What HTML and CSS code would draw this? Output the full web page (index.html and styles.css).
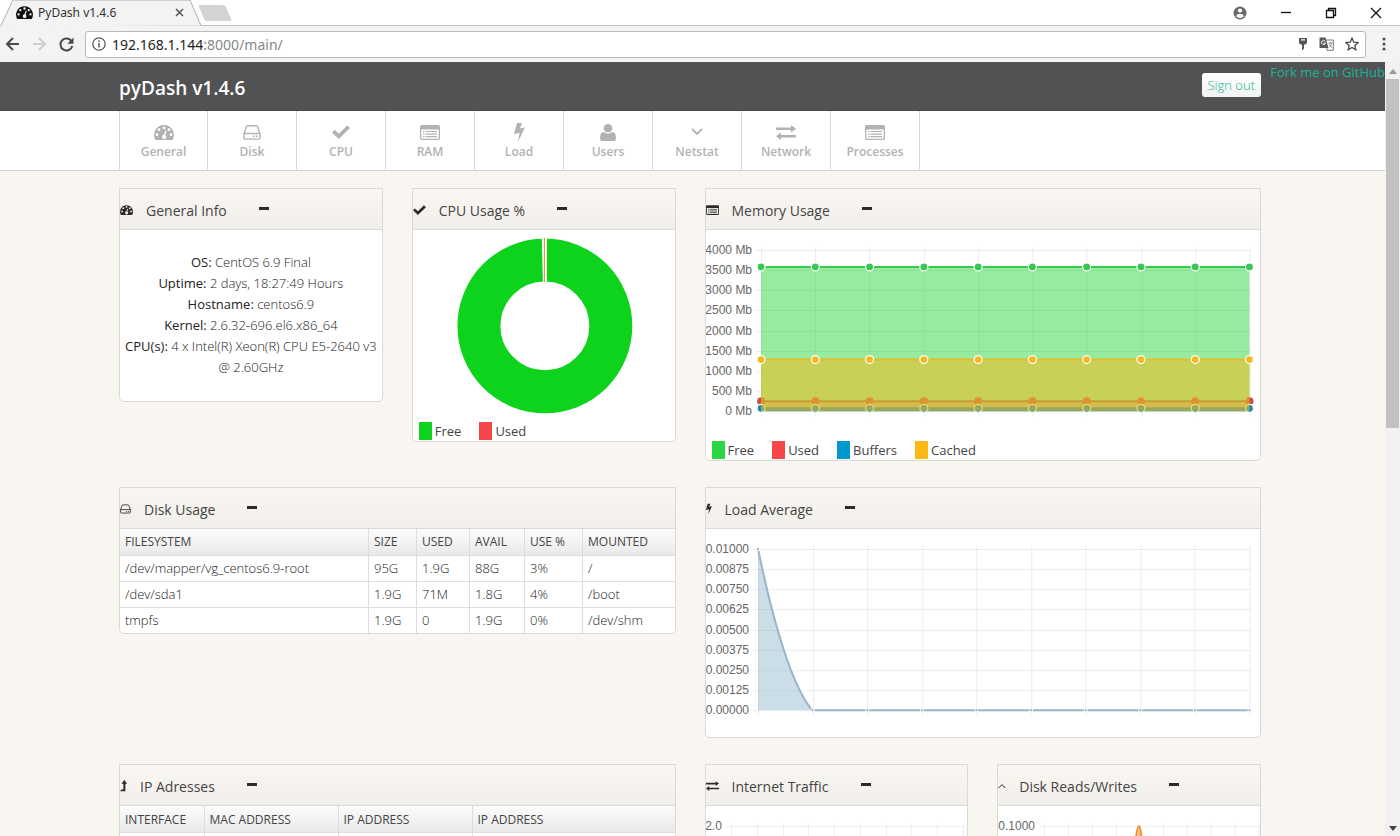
FILE: index.html
```html
<!DOCTYPE html>
<html lang="en">
<head>
    <meta charset="UTF-8">
    <meta name="viewport" content="width=device-width, initial-scale=1.0">
    <title>PyDash v1.4.6</title>
    <link rel="stylesheet" href="styles.css">
</head>
<body>
    <svg class="sprite" aria-hidden="true">
        <symbol id="i-gauge" viewBox="0 0 20 15">
            <path fill="currentColor" fill-rule="evenodd" d="M10 0a10 10 0 0 0-8.6 15h17.2A10 10 0 0 0 10 0zM10 1.4a1.4 1.4 0 1 1 0 2.8 1.4 1.4 0 0 1 0-2.8zM5 3.3a1.4 1.4 0 1 1 0 2.8 1.4 1.4 0 0 1 0-2.8zM3 8.3a1.4 1.4 0 1 1 0 2.8 1.4 1.4 0 0 1 0-2.8zM15 3.3a1.4 1.4 0 1 1 0 2.8 1.4 1.4 0 0 1 0-2.8zM17 8.3a1.4 1.4 0 1 1 0 2.8 1.4 1.4 0 0 1 0-2.8zM11.4 5.4l1.2.4-1.3 4.2a2.2 2.2 0 1 1-1.4-.3z"/>
        </symbol>
        <symbol id="i-disk" viewBox="0 0 18 15">
            <path fill="none" stroke="currentColor" stroke-width="1.4" stroke-linejoin="round" d="M1 8.5L3.6 1.6Q3.9.8 4.8.8h8.4q.9 0 1.2.8L17 8.5v4.2q0 1.4-1.4 1.4H2.4Q1 14.100 1 12.700zM1.200 8.500h15.600"/>
            <path fill="currentColor" d="M10 10.600h1.600v1.500H10zM13 10.600h1.600v1.500H13z"/>
        </symbol>
        <symbol id="i-check" viewBox="0 0 18 14">
            <path fill="currentColor" d="M0 7.500L2.700 4.800 6.800 8.700 15.200.4 18 3.100 6.800 14z"/>
        </symbol>
        <symbol id="i-list" viewBox="0 0 20 15">
            <path fill="currentColor" fill-rule="evenodd" d="M1.700 0h16.600Q20 0 20 1.700v11.600Q20 15 18.300 15H1.700Q0 15 0 13.300V1.700Q0 0 1.700 0zM1.300 4.500v8.500q0 .7.7.7h16q.7 0 .7-.7V4.500z"/>
            <path stroke="currentColor" stroke-width="1.200" d="M3 6.500h1.500M5.500 6.500H17M3 9.100h1.500M5.500 9.100H17M3 11.700h1.500M5.500 11.700H17"/>
        </symbol>
        <symbol id="i-bolt" viewBox="0 0 11 19">
            <path fill="currentColor" d="M3 0h5L6 5.500l5-1.200L4 19l1.600-9.200L0 11.200z"/>
        </symbol>
        <symbol id="i-user" viewBox="0 0 16 17">
            <circle fill="currentColor" cx="8" cy="4.300" r="4.300"/>
            <path fill="currentColor" d="M3.800 8a6 6 0 0 0 8.400 0q3.800.5 3.800 6.200 0 2.800-2.800 2.800H2.800Q0 17 0 14.200 0 8.500 3.800 8z"/>
        </symbol>
        <symbol id="i-down" viewBox="0 0 12 8">
            <path fill="none" stroke="currentColor" stroke-width="1.800" d="M1 1l5 5 5-5"/>
        </symbol>
        <symbol id="i-up" viewBox="0 0 12 8">
            <path fill="none" stroke="currentColor" stroke-width="1.500" d="M1 7l5-5 5 5"/>
        </symbol>
        <symbol id="i-swap" viewBox="0 0 20 15">
            <path fill="currentColor" d="M0 2.500h15V0l5 3.800-5 3.700V5H0zM20 10H5V7.500L0 11.200 5 15v-2.500h15z"/>
        </symbol>
        <symbol id="i-level" viewBox="0 0 8 14">
            <path fill="currentColor" d="M5 0l3.500 4.500H6.200V13H0l1.500-2h2.300V4.500H1.500z"/>
        </symbol>
    </svg>

    <div class="browser">
        <div class="tab-strip">
            <div class="tab">
                <svg class="tab-shape" viewBox="0 0 202 27" aria-hidden="true"><path d="M0 26.500L1 25.500 13 0H190L201 25.500H202"/></svg>
                <svg class="tab-icon"><use href="#i-gauge"/></svg>
                <span class="tab-title">PyDash v1.4.6</span>
                <button class="icon-button tab-close" aria-label="Close tab">
                    <svg width="9" height="9" viewBox="0 0 9 9"><path d="M1 1l7 7M8 1L1 8" stroke="#555" stroke-width="1.500"/></svg>
                </button>
            </div>
            <button class="icon-button" aria-label="New tab">
                <svg width="34" height="16" viewBox="0 0 34 16"><path d="M2 0h23q2 0 3 2l5 12q1 2-1 2H9q-2 0-3-2L1 2Q0 0 2 0z" fill="#d3d3d3"/></svg>
            </button>
            <div class="window-buttons">
                <button class="icon-button" aria-label="Profile">
                    <svg width="14" height="14" viewBox="0 0 14 14"><circle cx="7" cy="7" r="6.500" fill="#6a6a6a"/><circle cx="7" cy="4.500" r="2.100" fill="#fff"/><path d="M3 10q1-2.300 4-2.300t4 2.300q-1.500 2-4 2T3 10z" fill="#fff"/></svg>
                </button>
                <button class="icon-button" aria-label="Minimize">
                    <svg width="12" height="12" viewBox="0 0 12 12"><path d="M1 5.500h10" stroke="#111" stroke-width="1.300"/></svg>
                </button>
                <button class="icon-button" aria-label="Restore">
                    <svg width="12" height="12" viewBox="0 0 12 12" fill="none" stroke="#111" stroke-width="1.300"><path d="M1.500 3.500h7v7h-7zM3.500 3.500v-2h7v7h-2"/></svg>
                </button>
                <button class="icon-button" aria-label="Close">
                    <svg width="12" height="12" viewBox="0 0 12 12"><path d="M1 1l10 10M11 1L1 11" stroke="#111" stroke-width="1.300"/></svg>
                </button>
            </div>
        </div>
        <div class="toolbar">
            <button class="icon-button" aria-label="Back">
                <svg width="15" height="14" viewBox="0 0 15 14" fill="none" stroke="#4a4a4a" stroke-width="2"><path d="M14 7H2M8 1L2 7l6 6"/></svg>
            </button>
            <button class="icon-button" aria-label="Forward" disabled>
                <svg width="15" height="14" viewBox="0 0 15 14" fill="none" stroke="#cfcfcf" stroke-width="2"><path d="M1 7h12M7 1l6 6-6 6"/></svg>
            </button>
            <button class="icon-button" aria-label="Reload">
                <svg width="15" height="15" viewBox="0 0 15 15"><path d="M12.700 4.500A6 6 0 1 0 13.300 9" fill="none" stroke="#4a4a4a" stroke-width="2"/><path d="M14.500.5v6.300H8.300z" fill="#4a4a4a"/></svg>
            </button>
            <div class="address">
                <svg width="14" height="14" viewBox="0 0 14 14"><circle cx="7" cy="7" r="6.200" fill="none" stroke="#5a5a5a" stroke-width="1.300"/><path d="M7 6v4.500M7 3.300v1.500" stroke="#5a5a5a" stroke-width="1.500"/></svg>
                <label class="address-host" for="address">192.168.1.144</label>
                <input class="address-path" id="address" type="text" value=":8000/main/">
                <button class="icon-button" aria-label="Saved password">
                    <svg width="10" height="12" viewBox="0 0 10 12"><path fill="#555" fill-rule="evenodd" d="M1 0h8v5L7.500 6.500H6V10l-1 2H4V6.500H2.500L1 5zM3 1.300v1.200h4V1.300z"/></svg>
                </button>
                <button class="icon-button" aria-label="Translate">
                    <svg width="15" height="14" viewBox="0 0 15 14"><path d="M6.500 3h7.800v10.300H8z" fill="#fff" stroke="#777"/><path d="M1 .5h5.500L9.500 11H1Q.5 11 .5 10.500V1z" fill="#5a5a5a"/><path d="M6.200 4.300A2 2 0 1 0 6.500 6H4.800" fill="none" stroke="#fff"/><path d="M9.300 6h4M11.400 5v1M12.800 6q-.6 2.500-2.200 4M10.300 7.300l2.700 3.500" fill="none" stroke="#777" stroke-width=".8"/></svg>
                </button>
                <button class="icon-button" aria-label="Bookmark">
                    <svg width="14" height="14" viewBox="0 0 14 14"><path d="M7 1l1.700 4.200 4.500.3-3.400 2.900 1 4.400L7 10.400l-3.800 2.400 1-4.400L.8 5.500l4.500-.3z" fill="none" stroke="#4a4a4a" stroke-width="1.300"/></svg>
                </button>
            </div>
            <button class="icon-button" aria-label="Menu">
                <svg width="4" height="14" viewBox="0 0 4 14" fill="#4a4a4a"><circle cx="2" cy="2" r="1.500"/><circle cx="2" cy="7" r="1.500"/><circle cx="2" cy="12" r="1.500"/></svg>
            </button>
        </div>
    </div>

    <div class="viewport">
        <div class="page">
            <header class="header">
                <div class="container header-inner">
                    <h1>pyDash v1.4.6</h1>
                    <a class="sign-out" href="#logout">Sign out</a>
                </div>
                <a class="fork" href="#github">Fork me on GitHub</a>
            </header>

            <nav class="nav">
                <div class="container nav-inner">
                    <a href="#general"><svg width="20" height="15"><use href="#i-gauge"/></svg>General</a>
                    <a href="#disk"><svg width="18" height="15"><use href="#i-disk"/></svg>Disk</a>
                    <a href="#cpu"><svg width="18" height="14"><use href="#i-check"/></svg>CPU</a>
                    <a href="#ram"><svg width="20" height="15"><use href="#i-list"/></svg>RAM</a>
                    <a href="#load"><svg width="11" height="19"><use href="#i-bolt"/></svg>Load</a>
                    <a href="#users"><svg width="16" height="17"><use href="#i-user"/></svg>Users</a>
                    <a href="#netstat"><svg width="12" height="8"><use href="#i-down"/></svg>Netstat</a>
                    <a href="#network"><svg width="20" height="15"><use href="#i-swap"/></svg>Network</a>
                    <a href="#processes"><svg width="20" height="15"><use href="#i-list"/></svg>Processes</a>
                </div>
            </nav>

            <main class="container widgets">
                <section class="widget" id="general">
                    <div class="widget-header">
                        <svg width="13" height="10"><use href="#i-gauge"/></svg>
                        <h3>General Info</h3>
                        <button class="collapse" aria-label="Collapse"></button>
                    </div>
                    <div class="info">
                        <p><b>OS:</b> CentOS 6.9 Final</p>
                        <p><b>Uptime:</b> 2 days, 18:27:49 Hours</p>
                        <p><b>Hostname:</b> centos6.9</p>
                        <p><b>Kernel:</b> 2.6.32-696.el6.x86_64</p>
                        <p><b>CPU(s):</b> 4 x Intel(R) Xeon(R) CPU E5-2640 v3 @ 2.60GHz</p>
                    </div>
                </section>

                <section class="widget" id="cpu">
                    <div class="widget-header">
                        <svg width="13" height="10"><use href="#i-check"/></svg>
                        <h3>CPU Usage %</h3>
                        <button class="collapse" aria-label="Collapse"></button>
                    </div>
                    <svg class="chart" viewBox="0 0 262 191">
                        <circle cx="132" cy="96" r="66" fill="none" stroke="#0dd31d" stroke-width="43"/>
                        <path d="M129 8h5v44h-4z" fill="#fff"/>
                        <path d="M131 8h1v44h-1z" fill="#d9823c"/>
                    </svg>
                    <ul class="legend">
                        <li><i class="swatch cpu-free"></i>Free</li>
                        <li><i class="swatch used"></i>Used</li>
                    </ul>
                </section>

                <section class="widget wide" id="ram">
                    <div class="widget-header">
                        <svg width="13" height="10"><use href="#i-list"/></svg>
                        <h3>Memory Usage</h3>
                        <button class="collapse" aria-label="Collapse"></button>
                    </div>
                    <svg class="chart" id="memory-chart" viewBox="0 0 554 210"></svg>
                    <ul class="legend">
                        <li><i class="swatch free"></i>Free</li>
                        <li><i class="swatch used"></i>Used</li>
                        <li><i class="swatch buffers"></i>Buffers</li>
                        <li><i class="swatch cached"></i>Cached</li>
                    </ul>
                </section>

                <section class="widget wide" id="disk">
                    <div class="widget-header">
                        <svg width="11" height="10"><use href="#i-disk"/></svg>
                        <h3>Disk Usage</h3>
                        <button class="collapse" aria-label="Collapse"></button>
                    </div>
                    <table>
                        <colgroup>
                            <col><col class="col-size"><col class="col-used"><col class="col-avail"><col class="col-use"><col class="col-mounted">
                        </colgroup>
                        <thead>
                            <tr><th>FILESYSTEM</th><th>SIZE</th><th>USED</th><th>AVAIL</th><th>USE %</th><th>MOUNTED</th></tr>
                        </thead>
                        <tbody>
                            <tr><td>/dev/mapper/vg_centos6.9-root</td><td>95G</td><td>1.9G</td><td>88G</td><td>3%</td><td>/</td></tr>
                            <tr><td>/dev/sda1</td><td>1.9G</td><td>71M</td><td>1.8G</td><td>4%</td><td>/boot</td></tr>
                            <tr><td>tmpfs</td><td>1.9G</td><td>0</td><td>1.9G</td><td>0%</td><td>/dev/shm</td></tr>
                        </tbody>
                    </table>
                </section>

                <section class="widget wide" id="load">
                    <div class="widget-header">
                        <svg width="6" height="12"><use href="#i-bolt"/></svg>
                        <h3>Load Average</h3>
                        <button class="collapse" aria-label="Collapse"></button>
                    </div>
                    <svg class="chart" id="load-chart" viewBox="0 0 554 208"></svg>
                </section>

                <section class="widget wide" id="ip">
                    <div class="widget-header">
                        <svg width="7" height="12"><use href="#i-level"/></svg>
                        <h3>IP Adresses</h3>
                        <button class="collapse" aria-label="Collapse"></button>
                    </div>
                    <table>
                        <colgroup>
                            <col class="col-interface"><col class="col-address"><col class="col-address"><col>
                        </colgroup>
                        <thead>
                            <tr><th>INTERFACE</th><th>MAC ADDRESS</th><th>IP ADDRESS</th><th>IP ADDRESS</th></tr>
                        </thead>
                        <tbody>
                            <tr><td></td><td></td><td></td><td></td></tr>
                        </tbody>
                    </table>
                </section>

                <section class="widget" id="network">
                    <div class="widget-header">
                        <svg width="13" height="10"><use href="#i-swap"/></svg>
                        <h3>Internet Traffic</h3>
                        <button class="collapse" aria-label="Collapse"></button>
                    </div>
                    <svg class="chart" id="traffic-chart" viewBox="0 0 262 209"></svg>
                </section>

                <section class="widget" id="disk-io">
                    <div class="widget-header">
                        <svg width="8" height="8"><use href="#i-up"/></svg>
                        <h3>Disk Reads/Writes</h3>
                        <button class="collapse" aria-label="Collapse"></button>
                    </div>
                    <svg class="chart" id="io-chart" viewBox="0 0 262 209"></svg>
                </section>
            </main>
        </div>

        <div class="scrollbar" aria-hidden="true">
            <svg width="8" height="5" viewBox="0 0 8 5"><path d="M0 5l4-5 4 5z" fill="#9a9a9a"/></svg>
            <div class="track"><div class="thumb"></div></div>
            <svg width="8" height="5" viewBox="0 0 8 5"><path d="M0 0l4 5 4-5z" fill="#444"/></svg>
        </div>
    </div>

    <script>
        const TOP = 20;
        const BOTTOM = 181;
        const POINTS = 10;

        // grid lines and scale labels, an empty label leaves only the line
        function drawGrid(left, right, labels) {
            let out = '';
            labels.forEach((label, i) => {
                const y = Math.round(TOP + (BOTTOM - TOP) * i / (labels.length - 1));
                out += `<line class="grid" x1="${left - 5}" y1="${y + 0.5}" x2="${right + 1}" y2="${y + 0.5}"/>`;
                if (label) {
                    out += `<text class="scale" x="${left - 9}" y="${y + 4}">${label}</text>`;
                }
            });
            for (let i = 0; i < POINTS; i++) {
                const x = Math.round(pointX(left, right, i));
                out += `<line class="grid" x1="${x + 0.5}" y1="${TOP - 3}" x2="${x + 0.5}" y2="${BOTTOM + 5}"/>`;
            }
            return out;
        }

        function pointX(left, right, i) {
            return left + (right - left) * i / (POINTS - 1);
        }

        // one flat dataset: filled area, line and points
        function drawFlat(left, right, max, set) {
            const y = BOTTOM - (BOTTOM - TOP) * set.value / max;
            let out = `<rect x="${left}" y="${y}" width="${right - left}" height="${BOTTOM - y}" fill="${set.fill}"/>`;
            out += `<line x1="${left}" y1="${y}" x2="${right}" y2="${y}" stroke="${set.line}" stroke-width="2"/>`;
            for (let i = 0; i < POINTS; i++) {
                out += `<circle cx="${pointX(left, right, i)}" cy="${y}" r="4" fill="${set.dot}" stroke="${set.ring}" stroke-width="1.2"/>`;
            }
            return out;
        }

        const memory = [
            { value: 3580, fill: 'rgba(46, 216, 64, 0.5)', line: '#36c853', dot: '#36c853', ring: '#fff' },
            { value: 245, fill: 'rgba(247, 70, 74, 0.3)', line: '#9a6a50', dot: '#c8543c', ring: 'none' },
            { value: 70, fill: 'rgba(0, 120, 190, 0.8)', line: '#1787b5', dot: '#1787b5', ring: '#fff' },
            { value: 1280, fill: 'rgba(234, 192, 37, 0.6)', line: '#e5bc2c', dot: '#f5b820', ring: '#fff' }
        ];
        const memoryLabels = [4000, 3500, 3000, 2500, 2000, 1500, 1000, 500, 0].map(v => v + ' Mb');
        document.getElementById('memory-chart').innerHTML =
            drawGrid(55, 543, memoryLabels) + memory.map(set => drawFlat(55, 543, 4000, set)).join('');

        const loadLabels = [];
        for (let i = 8; i >= 0; i--) {
            loadLabels.push((i * 0.00125).toFixed(5));
        }
        let load = drawGrid(52, 543, loadLabels);
        load += '<path d="M52 20C62 68 82 152 106 181H52z" fill="rgba(151, 187, 205, 0.5)"/>';
        load += '<path d="M52 20C62 68 82 152 106 181H543" fill="none" stroke="#97b5c7" stroke-width="2"/>';
        for (let i = 0; i < POINTS; i++) {
            const y = i ? BOTTOM : TOP;
            load += `<circle cx="${pointX(52, 543, i)}" cy="${y}" r="1.5" fill="#7f9fb0" stroke="#fff"/>`;
        }
        document.getElementById('load-chart').innerHTML = load;

        const trafficLabels = ['2.0', '', '', '', '', '', '', '', '', '', ''];
        document.getElementById('traffic-chart').innerHTML = drawGrid(25, 257, trafficLabels);

        const ioLabels = ['0.1000', '', '', '', '', '', '', '', ''];
        document.getElementById('io-chart').innerHTML = drawGrid(46, 261, ioLabels) +
            '<path d="M118 181C130 181 135 20 141 20S152 181 164 181z" fill="rgba(245, 150, 50, 0.6)" stroke="#ea9436" stroke-width="2"/>';
    </script>
</body>
</html>
```

FILE: styles.css
```css
* {
    margin: 0;
    padding: 0;
    box-sizing: border-box;
}

body {
    font-family: "Open Sans", "Noto Sans", sans-serif;
    font-size: 13px;
    color: #444;
    background: #f9f6f1;
    height: 100vh;
    display: flex;
    flex-direction: column;
    overflow: hidden;
}

svg {
    display: block;
    flex: none;
}

.sprite {
    position: absolute;
    width: 0;
    height: 0;
}

/* Browser window */
.browser {
    flex: none;
    font-family: "Noto Sans", sans-serif;
}

.icon-button {
    border: 0;
    background: none;
    flex: none;
}

.tab-strip {
    display: flex;
    align-items: center;
    height: 26px;
    background: #fff;
    border-bottom: 1px solid #c4c4c4;
}

.tab {
    position: relative;
    display: flex;
    align-items: center;
    width: 198px;
    height: 26px;
    padding: 0 14px 0 16px;
}

.tab-shape {
    position: absolute;
    left: 0;
    top: 0;
    width: 202px;
    height: 27px;
    fill: #f3f3f3;
    stroke: #b0b0b0;
}

.tab-icon {
    position: relative;
    width: 17px;
    height: 13px;
    color: #111;
}

.tab-title {
    position: relative;
    flex: 1;
    margin-left: 5px;
    font-size: 12px;
    color: #333;
}

.tab-close {
    position: relative;
}

.window-buttons {
    display: flex;
    align-items: center;
    gap: 33px;
    margin-left: auto;
    padding-right: 18px;
}

.toolbar {
    display: flex;
    align-items: center;
    gap: 12px;
    height: 36px;
    padding: 0 14px 0 5px;
    background: #f3f3f3;
}

.address {
    display: flex;
    align-items: center;
    flex: 1;
    height: 27px;
    padding: 0 6px;
    margin: 0 4px 0 -1px;
    background: #fff;
    border: 1px solid #b9b9b9;
    border-radius: 3px;
}

.address .icon-button {
    margin-left: 11px;
}

.address-host {
    margin-left: 6px;
    font-size: 14px;
    color: #222;
}

.address-path {
    flex: 1;
    min-width: 0;
    border: 0;
    outline: none;
    font-family: inherit;
    font-size: 14px;
    color: #888;
}

/* Page */
.viewport {
    flex: 1;
    min-height: 0;
    display: flex;
}

.page {
    flex: 1;
    overflow: hidden;
}

.container {
    max-width: 1147px;
    margin: 0 auto;
    padding-right: 5px;
}

.header {
    position: relative;
    background: #505254;
    border-bottom: 1px solid #454545;
}

.header-inner {
    display: flex;
    align-items: center;
    justify-content: space-between;
    height: 48px;
}

.header h1 {
    padding-top: 3px;
    font-size: 19px;
    font-weight: 600;
    color: #fff;
}

.sign-out {
    height: 24px;
    padding: 0 6px;
    margin-bottom: 2px;
    line-height: 24px;
    background: linear-gradient(#fff, #f0f3f2);
    border-radius: 3px;
    font-weight: 300;
}

.sign-out,
.fork {
    color: #19b394;
    text-decoration: none;
}

.fork {
    position: absolute;
    top: 1px;
    right: 0;
}

.nav {
    background: #fff;
    border-bottom: 1px solid #d2d2d2;
}

.nav-inner {
    display: flex;
}

.nav a {
    display: flex;
    flex-direction: column;
    align-items: center;
    justify-content: space-between;
    width: 89px;
    height: 59px;
    padding: 0 0 9px;
    border-right: 1px solid #d9d9d9;
    font-size: 12px;
    font-weight: 600;
    line-height: 18px;
    color: #b2b2b2;
    text-decoration: none;
}

.nav a:first-child {
    border-left: 1px solid #d9d9d9;
}

.nav a svg {
    margin: auto 0;
    transform: translateY(5px);
}

.widgets {
    display: grid;
    grid-template-columns: repeat(4, minmax(0, 1fr));
    gap: 26px 29px;
    align-items: start;
    padding-top: 17px;
}

.widget {
    overflow: hidden;
    background: #fff;
    border: 1px solid #d9d9d6;
    border-radius: 0 0 5px 5px;
}

.widget.wide {
    grid-column: span 2;
}

.widget-header {
    display: flex;
    align-items: center;
    height: 41px;
    padding-top: 2px;
    color: #2b2b2b;
    background: linear-gradient(#faf7f2, #f1efeb);
    border-bottom: 1px solid #d9d9d6;
}

.widget-header h3 {
    margin: 0 32px 0 13px;
    font-size: 14px;
    font-weight: 400;
    color: #444;
}

.collapse {
    width: 10px;
    height: 3px;
    margin-bottom: 3px;
    border: 0;
    background: #2b2b2b;
}

.info {
    padding: 22px 4px 23px;
    font-weight: 300;
    line-height: 21px;
    text-align: center;
    color: #222;
}

.info b {
    font-weight: 400;
}

.chart {
    width: 100%;
    height: auto;
}

.chart .grid {
    stroke: rgba(0, 0, 0, 0.07);
}

.chart .scale {
    font-family: "Liberation Sans", Arial, sans-serif;
    font-size: 12px;
    text-anchor: end;
    fill: #666;
}

.legend {
    display: flex;
    gap: 18px;
    height: 20px;
    padding-left: 6px;
    list-style: none;
}

.legend li {
    display: flex;
    align-items: center;
    gap: 3px;
}

.swatch {
    width: 13px;
    height: 18px;
}

.cpu-free {
    background: #0dd31d;
}

.free {
    background: #2bd645;
}

.used {
    background: #f7464a;
}

.buffers {
    background: #0097cd;
}

.cached {
    background: #fdb813;
}

table {
    width: 100%;
    table-layout: fixed;
    border-collapse: collapse;
}

th,
td {
    height: 26px;
    padding: 0 5px;
    text-align: left;
    border-left: 1px solid #ddd;
    border-top: 1px solid #ddd;
}

th:first-child,
td:first-child {
    border-left: 0;
}

th {
    border-top: 0;
    font-size: 12px;
    font-weight: 400;
}

td {
    font-weight: 300;
    color: #222;
}

thead {
    background: linear-gradient(#fcfcfc, #e9e9e9);
}

.col-size {
    width: 48px;
}

.col-used {
    width: 53px;
}

.col-avail {
    width: 55px;
}

.col-use {
    width: 58px;
}

.col-mounted {
    width: 92px;
}

.col-interface {
    width: 84px;
}

.col-address {
    width: 134px;
}

/* Scrollbar */
.scrollbar {
    flex: none;
    width: 15px;
    display: flex;
    flex-direction: column;
    align-items: center;
    gap: 5px;
    padding: 7px 0 5px;
    background: #f1f1f1;
}

.track {
    flex: 1;
    width: 13px;
}

.thumb {
    height: 47%;
    background: #c1c1c1;
}
```
